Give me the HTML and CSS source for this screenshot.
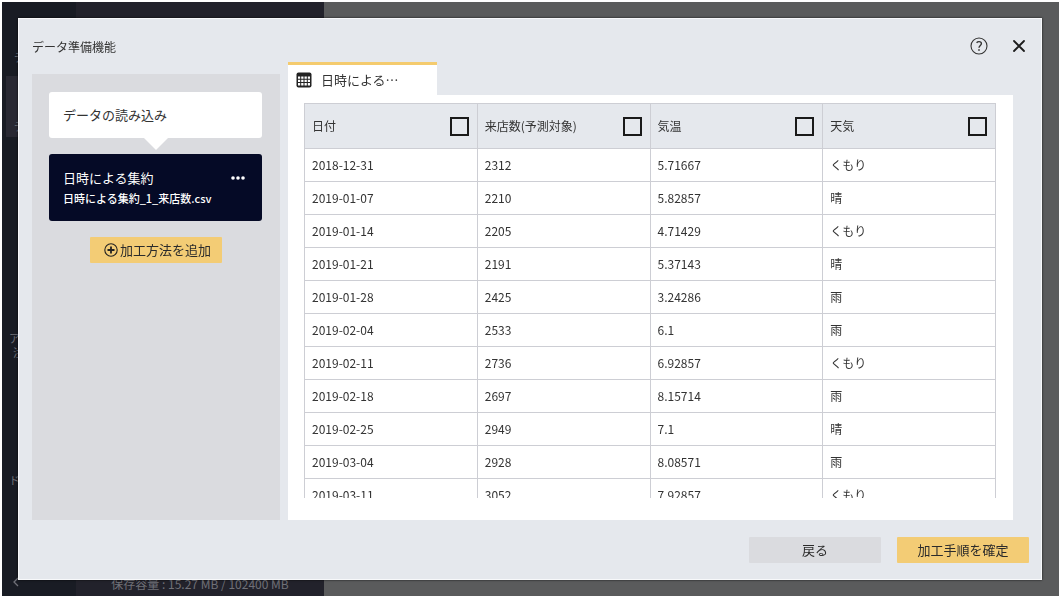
FILE: index.html
```html
<!DOCTYPE html>
<html lang="ja">
<head>
<meta charset="utf-8">
<title>データ準備機能</title>
<link rel="stylesheet" href="styles.css">
</head>
<body>
<div class="app">
  <nav class="nav">
    <span class="nav-item nav-first">デ</span>
    <span class="nav-item nav-current">デ</span>
    <span class="nav-item nav-double"><span>ア</span><span class="nav-second">注</span></span>
    <span class="nav-item nav-doc">ド</span>
    <svg class="nav-back" viewBox="0 0 6 10"><path d="M5 1 1 5l4 4" fill="none" stroke="currentColor" stroke-width="1.3"/></svg>
  </nav>
  <aside class="storage">保存容量 : 15.27 MB / 102400 MB</aside>
  <div class="canvas"></div>
</div>

<div class="modal" role="dialog" aria-labelledby="modal-title">
  <header class="modal-header">
    <h1 class="modal-title" id="modal-title">データ準備機能</h1>
    <div class="modal-tools">
      <button class="icon-button" type="button" aria-label="ヘルプ">
        <svg width="18" height="18" viewBox="0 0 18 18" fill="none" stroke="#333"><circle cx="9" cy="9" r="8" stroke-width="1.1"/><path d="M6.600 5.700C7.200 5 8 4.600 9 4.600c1.500 0 2.400.7 2.400 1.900 0 1.800-2.400 2.100-2.400 4.300" stroke-width="1.400"/><path d="M9 12.200v1.500" stroke-width="1.600"/></svg>
      </button>
      <button class="icon-button" type="button" aria-label="閉じる">
        <svg width="12" height="12" viewBox="0 0 12 12" fill="none" stroke="#1c1c1c" stroke-width="1.800" stroke-linecap="round"><path d="m1 1 10 10M11 1 1 11"/></svg>
      </button>
    </div>
  </header>

  <div class="modal-body">
    <section class="steps">
      <div class="step step-source">データの読み込み</div>
      <div class="step step-active">
        <div class="step-head">
          <span>日時による集約</span>
          <button class="more" type="button" aria-label="メニュー">
            <svg width="14" height="4" viewBox="0 0 14 4" fill="currentColor"><circle cx="2" cy="2" r="1.800"/><circle cx="7" cy="2" r="1.800"/><circle cx="12" cy="2" r="1.800"/></svg>
          </button>
        </div>
        <div class="step-file">日時による集約_1_来店数.csv</div>
      </div>
      <button class="button button-primary add-step" type="button">
        <svg width="14" height="14" viewBox="0 0 14 14" fill="none" stroke="#222"><circle cx="7" cy="7" r="6.200" stroke-width="1.100"/><path d="M7 3.500v7M3.500 7h7" stroke-width="1.800"/></svg>
        加工方法を追加
      </button>
    </section>

    <section class="preview">
      <button class="tab" type="button">
        <svg width="16" height="16" viewBox="0 0 16 16"><rect x=".5" y=".5" width="15" height="15" rx="2" fill="#222"/><path d="M2 4.500h2.200v2.200H2zm3.200 0h2.300v2.200H5.200zm3.300 0h2.300v2.200H8.500zm3.300 0H14v2.200h-2.200zM2 7.700h2.200v2.300H2zm3.200 0h2.300v2.300H5.200zm3.300 0h2.300v2.300H8.500zm3.300 0H14v2.300h-2.200zM2 11h2.200v2.500H2zm3.200 0h2.300v2.500H5.200zm3.300 0h2.300v2.500H8.500zm3.300 0H14v2.500h-2.200z" fill="#fff"/></svg>
        <span>日時による…</span>
      </button>
      <div class="panel">
        <div class="table-view">
          <table class="data">
            <thead>
              <tr>
                <th><div class="head-cell"><label for="c1">日付</label><input id="c1" type="checkbox"></div></th>
                <th><div class="head-cell"><label for="c2">来店数(予測対象)</label><input id="c2" type="checkbox"></div></th>
                <th><div class="head-cell"><label for="c3">気温</label><input id="c3" type="checkbox"></div></th>
                <th><div class="head-cell"><label for="c4">天気</label><input id="c4" type="checkbox"></div></th>
              </tr>
            </thead>
            <tbody>
              <tr><td>2018-12-31</td><td>2312</td><td>5.71667</td><td>くもり</td></tr>
              <tr><td>2019-01-07</td><td>2210</td><td>5.82857</td><td>晴</td></tr>
              <tr><td>2019-01-14</td><td>2205</td><td>4.71429</td><td>くもり</td></tr>
              <tr><td>2019-01-21</td><td>2191</td><td>5.37143</td><td>晴</td></tr>
              <tr><td>2019-01-28</td><td>2425</td><td>3.24286</td><td>雨</td></tr>
              <tr><td>2019-02-04</td><td>2533</td><td>6.1</td><td>雨</td></tr>
              <tr><td>2019-02-11</td><td>2736</td><td>6.92857</td><td>くもり</td></tr>
              <tr><td>2019-02-18</td><td>2697</td><td>8.15714</td><td>雨</td></tr>
              <tr><td>2019-02-25</td><td>2949</td><td>7.1</td><td>晴</td></tr>
              <tr><td>2019-03-04</td><td>2928</td><td>8.08571</td><td>雨</td></tr>
              <tr><td>2019-03-11</td><td>3052</td><td>7.92857</td><td>くもり</td></tr>
            </tbody>
          </table>
        </div>
      </div>
    </section>
  </div>

  <footer class="modal-footer">
    <button class="button button-secondary" type="button">戻る</button>
    <button class="button button-primary" type="button">加工手順を確定</button>
  </footer>
</div>
</body>
</html>
```
FILE: styles.css
```css
* {
  box-sizing: border-box;
}

body {
  margin: 0;
  height: 100vh;
  padding: 2px;
  background: #fff;
  color: #333;
  font: 12px/18px "Noto Sans CJK JP", sans-serif;
  overflow: hidden;
}

button {
  font: inherit;
  color: inherit;
  border: 0;
  padding: 0;
  background: none;
  cursor: pointer;
}

svg {
  display: block;
  flex: none;
}

/* Dimmed application behind the dialog */
.app {
  display: grid;
  grid-template-columns: 74px 248px 1fr;
  height: 100%;
  color: #707178;
}

.nav {
  display: flex;
  flex-direction: column;
  background: #191c24;
  padding: 46px 0 9px 4px;
  font-size: 11px;
}

.nav-item {
  padding-left: 8px;
}

.nav-current {
  display: flex;
  align-items: flex-end;
  height: 61px;
  margin-top: 10px;
  padding-bottom: 2px;
  background: #292933;
}

.nav-double {
  display: flex;
  flex-direction: column;
  margin-top: 194px;
  padding-left: 3px;
  line-height: 14px;
}

.nav-second {
  padding-left: 4px;
}

.nav-doc {
  margin-top: 112px;
  padding-left: 3px;
}

.nav-back {
  width: 6px;
  height: 10px;
  margin-top: auto;
  margin-left: 7px;
}

.storage {
  display: flex;
  align-items: flex-end;
  justify-content: center;
  padding-bottom: 3px;
  background: #22222b;
}

.canvas {
  background: #5a5b5c;
}

/* Dialog */
.modal {
  position: fixed;
  inset: 18px 19px 18px 18px;
  display: flex;
  flex-direction: column;
  background: #e5e8ed;
  border: 1px solid #f7f8fa;
  box-shadow: 0 0 2px rgba(0, 0, 0, 0.8);
}

.modal-header {
  display: flex;
  align-items: center;
  justify-content: space-between;
  height: 43px;
  padding: 12px 16px 0 13px;
}

.modal-title {
  margin: 0;
  font-size: 12px;
  font-weight: 400;
}

.modal-tools {
  display: flex;
  align-items: center;
  gap: 25px;
  padding-bottom: 2px;
}

.modal-body {
  display: flex;
  flex: 1;
  min-height: 0;
  gap: 8px;
  padding: 0 28px 0 13px;
}

.steps {
  display: flex;
  flex: 0 0 248px;
  flex-direction: column;
  gap: 16px;
  margin-top: 12px;
  padding: 18px 18px 18px 17px;
  background: #dadbdf;
}

.step {
  border-radius: 3px;
  padding: 14px;
  font-size: 13px;
}

.step-source {
  position: relative;
  background: #fff;
}

.step-source::after {
  content: "";
  position: absolute;
  top: 100%;
  left: 50%;
  border: 12px solid transparent;
  border-top-color: #fff;
  border-bottom: 0;
  transform: translateX(-50%);
}

.step-active {
  background: #050a26;
  color: #fff;
  padding: 14px 14px 12px;
}

.step-head {
  display: flex;
  align-items: center;
  justify-content: space-between;
  line-height: 20px;
}

.more {
  margin-right: 3px;
}

.step-file {
  font-size: 11px;
  font-weight: 500;
  line-height: 21px;
}

.preview {
  display: flex;
  flex: 1;
  flex-direction: column;
  min-width: 0;
}

.tab {
  display: flex;
  align-items: center;
  align-self: flex-start;
  gap: 9px;
  width: 149px;
  height: 33px;
  padding: 0 8px;
  border-top: 3px solid #f4cb6e;
  background: #fff;
  font-size: 13px;
}

.panel {
  display: flex;
  flex: 1;
  min-height: 0;
  padding: 8px 17px 22px 16px;
  background: #fff;
}

.table-view {
  flex: 1;
  overflow: hidden;
}

.data {
  width: 100%;
  table-layout: fixed;
  border-collapse: collapse;
}

.data th,
.data td {
  height: 33px;
  padding: 0 7px;
  border: 1px solid #cdced4;
  text-align: left;
  font-weight: 400;
}

.data th {
  height: 45px;
  background: #e5e8ed;
}

.head-cell {
  display: flex;
  align-items: center;
  justify-content: space-between;
}

.head-cell input {
  appearance: none;
  width: 19px;
  height: 19px;
  margin: 0 1px 0 0;
  border: 2px solid #1a1a1a;
}

.modal-footer {
  display: flex;
  justify-content: flex-end;
  gap: 16px;
  padding: 17px 12px 16px;
}

.button {
  display: flex;
  align-items: center;
  justify-content: center;
  gap: 2px;
  width: 132px;
  height: 26px;
  border-radius: 1px;
  color: #2b2b2b;
  font-size: 13px;
}

.button-primary {
  background: #f3cc75;
}

.button-secondary {
  background: #dadbdf;
}

.add-step {
  align-self: center;
  padding-left: 4px;
}
```
